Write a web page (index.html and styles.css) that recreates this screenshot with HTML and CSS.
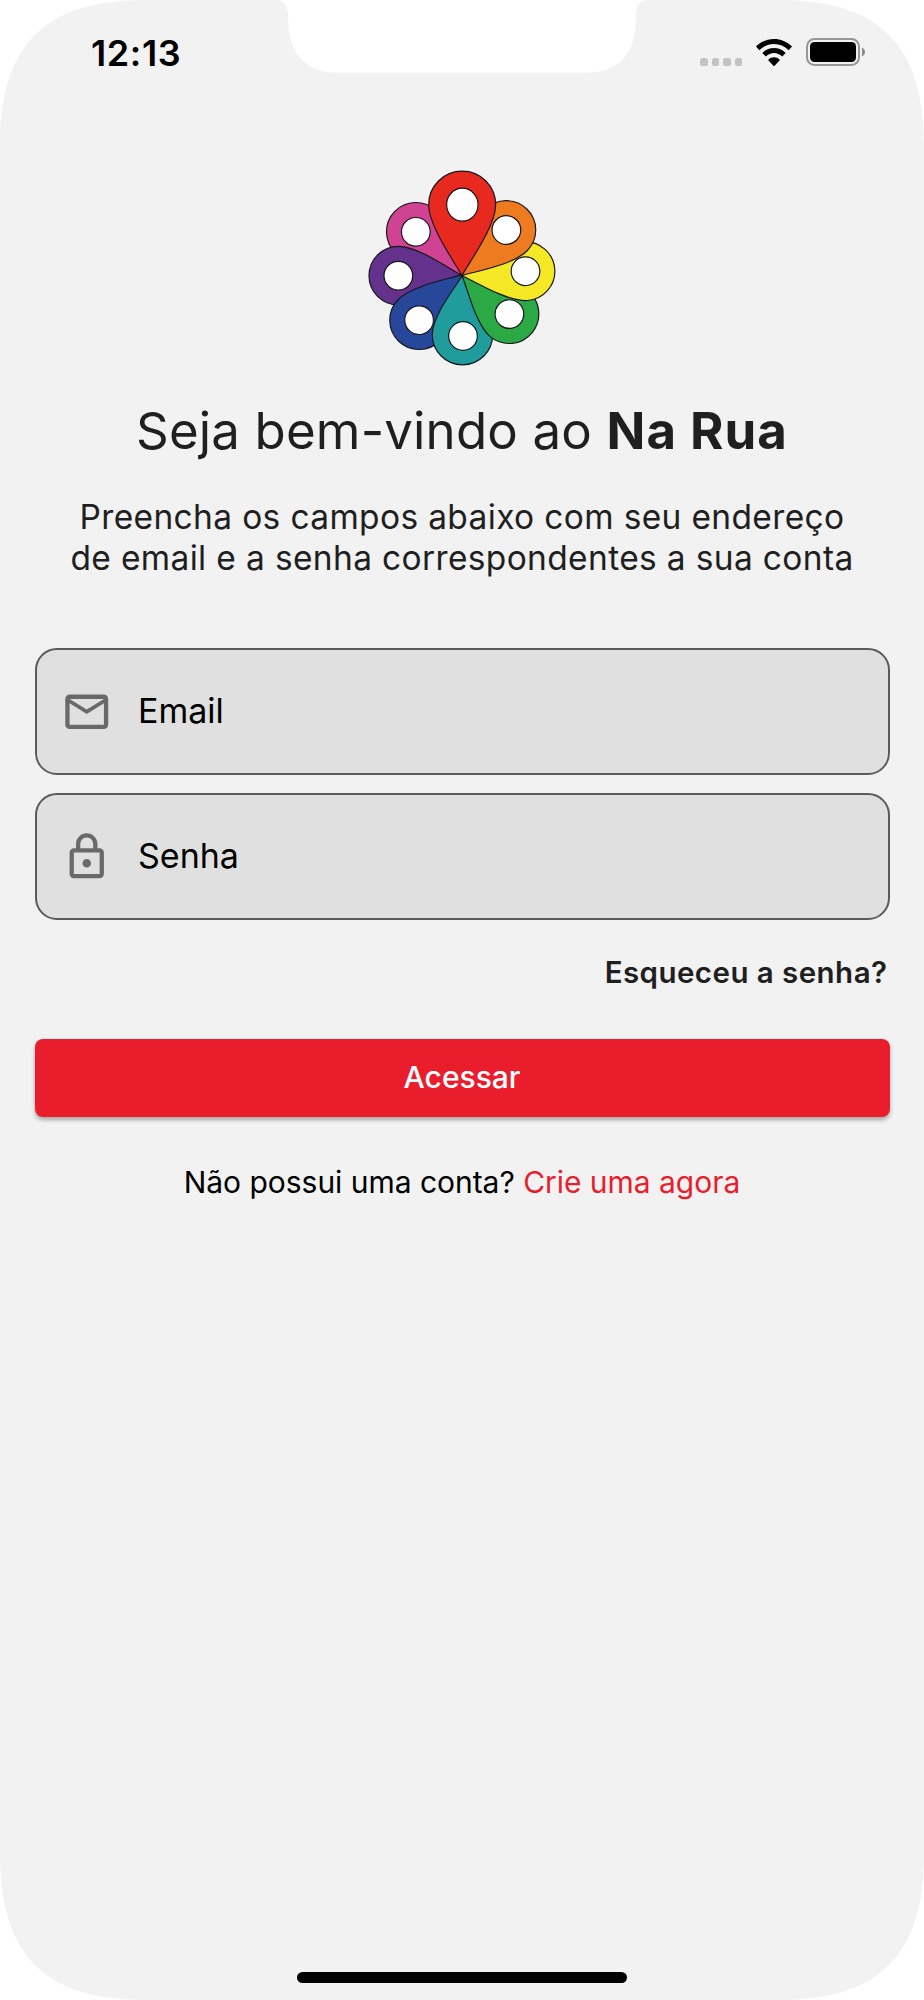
FILE: index.html
```html
<!DOCTYPE html>
<html lang="pt-BR">
<head>
    <meta charset="UTF-8">
    <meta name="viewport" content="width=device-width, initial-scale=1.0">
    <title>Na Rua</title>
    <link rel="stylesheet" href="styles.css">
</head>
<body>
    <div class="phone">
        <div class="status-bar">
            <span class="time">12:13</span>
            <div class="status-icons">
                <div class="dots"><i></i><i></i><i></i><i></i></div>
                <svg class="wifi" viewBox="0 0 36 27">
                    <path d="M18 0C24.5 0 31 2.6 36 7.6L32.6 11.2C28.6 7.3 23.5 5.1 18 5.1S7.4 7.3 3.4 11.2L0 7.6C5 2.6 11.5 0 18 0Z"/>
                    <path d="M18 9C22.3 9 26.5 10.7 29.7 14L26.2 17.6C23.9 15.3 21 14.1 18 14.1S12.1 15.3 9.8 17.6L6.3 14C9.5 10.7 13.7 9 18 9Z"/>
                    <path d="M18 18.2C20 18.2 22 19 23.5 20.5Q24 21 23.5 21.5L18.6 26.7Q18 27.2 17.4 26.7L12.5 21.5Q12 21 12.5 20.5C14 19 16 18.2 18 18.2Z"/>
                </svg>
                <svg class="battery" viewBox="0 0 60 28">
                    <rect x="1" y="1" width="52" height="26" rx="7.5" fill="none" stroke="#979797" stroke-width="2"/>
                    <rect x="4" y="4" width="46" height="20" rx="4.5"/>
                    <path d="M56 9.5C60 11.5 60 16.5 56 18.5Z" fill="#8c8c8c"/>
                </svg>
            </div>
        </div>

        <div class="content">
            <svg class="logo" viewBox="0 0 645 645">
                <defs>
                    <g id="pin">
                        <path d="M0 0C-18 -35 -88 -130 -88 -191A88 88 0 0 1 88 -191C88 -130 18 -35 0 0Z"/>
                        <circle cy="-191" r="43" fill="#fff"/>
                    </g>
                </defs>
                <g transform="translate(321 347)" stroke="#15151a" stroke-width="3.5">
                    <use href="#pin" fill="#d04394" transform="rotate(-46.5)"/>
                    <use href="#pin" fill="#64328c" transform="rotate(-90)"/>
                    <use href="#pin" fill="#26479a" transform="translate(4 -4) rotate(-136)"/>
                    <g fill="#209c9d">
                        <path d="M0 0C18 33 92 118 92 177A90 90 0 0 1 -89 177C-89 118 -18 33 0 0Z"/>
                        <circle cx="3" cy="181" r="43" fill="#fff"/>
                    </g>
                    <g fill="#2aa944" transform="rotate(129)">
                        <path d="M0 0C-18 -35 -89 -125 -89 -182A89 89 0 0 1 89 -182C89 -125 18 -35 0 0Z"/>
                        <circle cy="-183" r="43" fill="#fff"/>
                    </g>
                    <use href="#pin" fill="#f5e926" transform="rotate(86)"/>
                    <use href="#pin" fill="#ef7b21" transform="rotate(44.2)"/>
                    <g fill="#e7291f">
                        <path d="M0 0C-20 -38 -100 -148 -100 -213A100 100 0 0 1 101 -213C101 -148 20 -38 0 0Z"/>
                        <ellipse cx="1" cy="-213" rx="47" ry="49.5" fill="#fff"/>
                    </g>
                </g>
            </svg>

            <h1 class="title">Seja bem-vindo ao <b>Na Rua</b></h1>
            <p class="subtitle">Preencha os campos abaixo com seu endereço<br>de email e a senha correspondentes a sua conta</p>

            <div class="field">
                <svg class="field-icon" viewBox="0 0 24 24"><path d="M22 6c0-1.1-.9-2-2-2H4c-1.1 0-2 .9-2 2v12c0 1.1.9 2 2 2h16c1.1 0 2-.9 2-2V6zm-2 0l-8 5-8-5h16zm0 12H4V8l8 5 8-5v10z"/></svg>
                <label>Email</label>
            </div>
            <div class="field">
                <svg class="field-icon" viewBox="0 0 24 24"><path d="M18 8h-1V6c0-2.76-2.24-5-5-5S7 3.24 7 6v2H6c-1.1 0-2 .9-2 2v10c0 1.1.9 2 2 2h12c1.1 0 2-.9 2-2V10c0-1.1-.9-2-2-2zM9 6c0-1.66 1.34-3 3-3s3 1.34 3 3v2H9V6zm9 14H6V10h12v10zm-6-3c1.1 0 2-.9 2-2s-.9-2-2-2-2 .9-2 2 .9 2 2 2z"/></svg>
                <label>Senha</label>
            </div>

            <a class="forgot">Esqueceu a senha?</a>
            <button class="login-btn">Acessar</button>
            <p class="signup">Não possui uma conta? <a>Crie uma agora</a></p>
        </div>

        <div class="home-bar"></div>
    </div>
</body>
</html>
```
FILE: styles.css
```css
body {
    margin: 0;
    background-color: #fff;
    font-family: 'Inter', sans-serif;
}

/* screen with rounded corners and the notch cut out */
.phone {
    display: flex;
    flex-direction: column;
    width: 924px;
    height: 2000px;
    background-color: #f2f2f2;
    clip-path: path('M0 145C0 45 45 0 145 0H274C284 0 288 5 288 16C288 53 304 72.7 338 72.7H587C620 72.7 636 53 636 16C636 5 640 0 650 0H779C879 0 924 45 924 145V1855C924 1955 879 2000 779 2000H145C45 2000 0 1955 0 1855Z');
}

.status-bar {
    display: flex;
    justify-content: space-between;
    box-sizing: border-box;
    height: 160px;
    padding: 31px 58px 0 91px;
}

.time {
    font-size: 36px;
    font-weight: 600;
    line-height: 44px;
    letter-spacing: 0.6px;
}

.status-icons {
    display: flex;
    align-items: flex-start;
    padding-top: 7px;
}

.dots {
    display: flex;
    gap: 4px;
    margin: 20px 14px 0 0;
}

.dots i {
    width: 7.5px;
    height: 8px;
    border-radius: 2.5px;
    background-color: #c3c3c3;
}

.wifi {
    width: 36px;
    height: 27px;
    margin: 1px 14px 0 0;
}

.battery {
    width: 60px;
    height: 28px;
}

.content {
    display: flex;
    flex: 1;
    flex-direction: column;
    padding: 0 34.5px;
}

.logo {
    width: 215px;
    height: 215px;
    align-self: center;
}

.title {
    margin: 25px 0 0;
    font-size: 51px;
    font-weight: 400;
    line-height: 62px;
    letter-spacing: 0.15px;
    text-align: center;
    color: #1f1f1f;
}

.title b {
    font-weight: 700;
    letter-spacing: 1px;
}

.subtitle {
    margin: 35px 0 0;
    font-size: 33.5px;
    line-height: 41px;
    letter-spacing: 0.35px;
    text-align: center;
    color: #1f1f1f;
}

.field {
    display: flex;
    align-items: center;
    box-sizing: border-box;
    height: 127px;
    margin-top: 69px;
    padding-left: 24px;
    border: 2px solid #5a5a5a;
    border-radius: 22px;
    background-color: #e0e0e0;
}

.field + .field {
    margin-top: 18px;
}

.field-icon {
    width: 51.5px;
    height: 51.5px;
    margin-right: 26px;
    fill: #696969;
}

.field label {
    padding-bottom: 2px;
    font-size: 34px;
    line-height: 42px;
}

.forgot {
    align-self: flex-end;
    margin: 33px 2px 0 0;
    font-size: 29.5px;
    font-weight: 600;
    line-height: 38px;
    letter-spacing: 0.45px;
    color: #1f1f1f;
}

.login-btn {
    height: 78px;
    margin-top: 48px;
    padding: 0 0 2px;
    border: none;
    border-radius: 8px;
    background-color: #ea1d2c;
    box-shadow: 0 3px 4px rgba(0, 0, 0, 0.3);
    color: #fff;
    font-family: inherit;
    font-size: 30px;
    font-weight: 500;
}

.signup {
    margin: 46px 0 0;
    font-size: 30px;
    line-height: 38px;
    letter-spacing: -0.03px;
    text-align: center;
}

.signup a {
    color: #ea1d2c;
}

.home-bar {
    width: 330px;
    height: 11px;
    margin: 0 auto 17px;
    border-radius: 6px;
    background-color: #000;
}
```
